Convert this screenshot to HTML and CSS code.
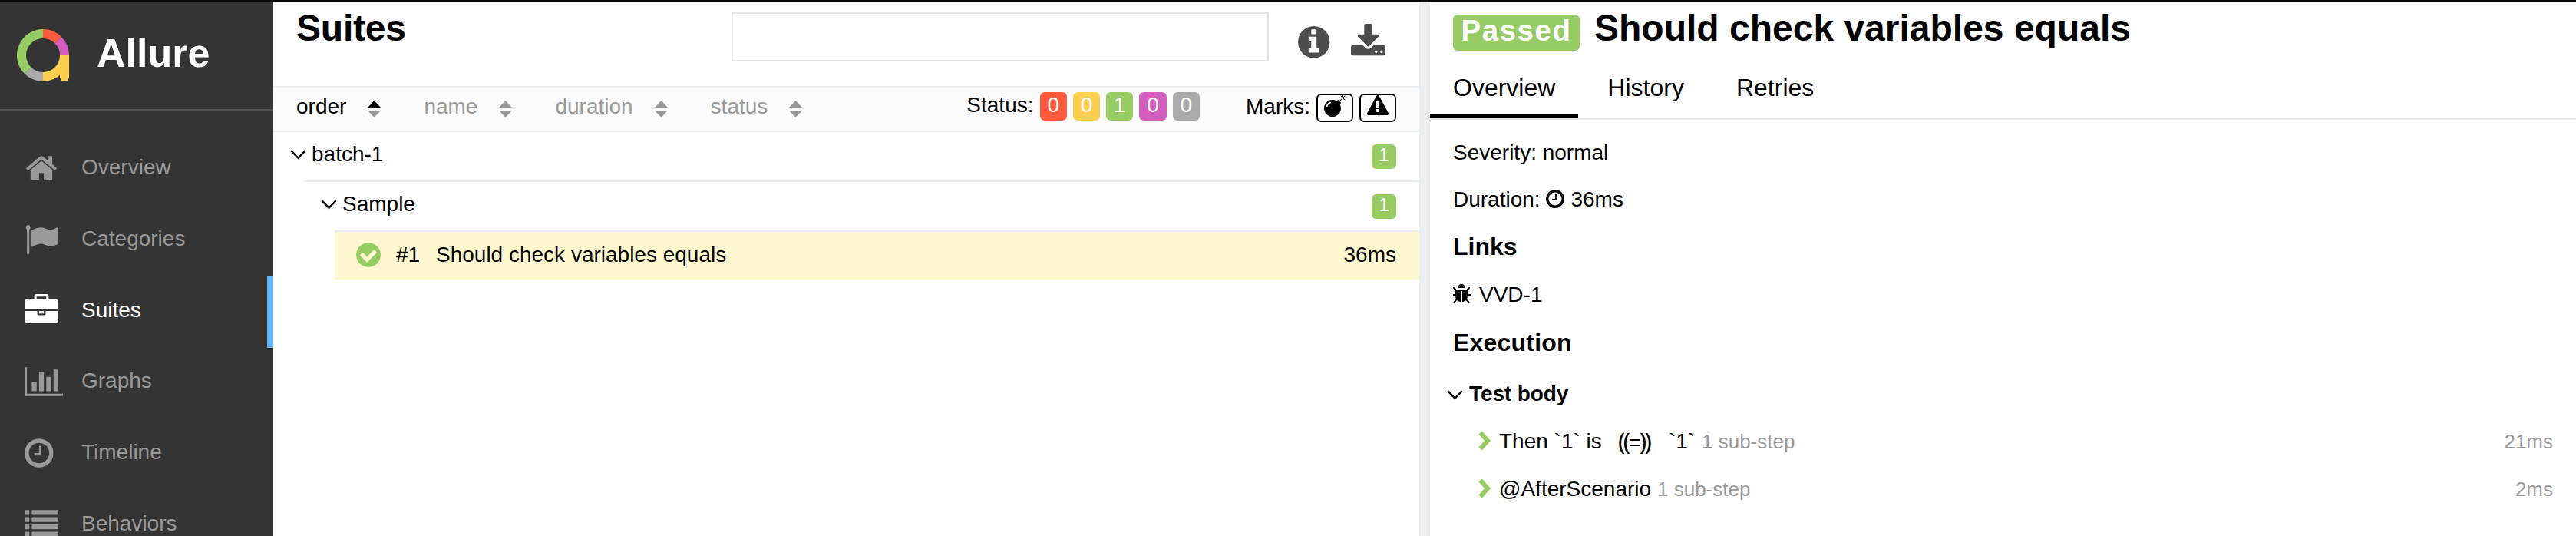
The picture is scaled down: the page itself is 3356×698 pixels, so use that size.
FILE: index.html
```html
<!DOCTYPE html>
<html lang="en">
<head>
<meta charset="utf-8">
<title>Allure Report</title>
<link rel="stylesheet" href="styles.css">
</head>
<body>
<svg class="defs" width="0" height="0">
  <symbol id="home" viewBox="0 0 1792 1792"><path d="M1472 992v480q0 26-19 45t-45 19h-384v-384h-256v384h-384q-26 0-45-19t-19-45v-480q0-1 .5-3t.5-3l575-474 575 474q1 2 1 6zm223-69l-62 74q-8 9-21 11h-3q-13 0-21-7l-692-577-692 577q-12 8-24 7-13-2-21-11l-62-74q-8-10-7-23.5t11-21.5l719-599q32-26 76-26t76 26l244 204v-195q0-14 9-23t23-9h192q14 0 23 9t9 23v408l219 182q10 8 11 21.5t-7 23.5z"/></symbol>
  <symbol id="flag" viewBox="0 0 1792 1792"><path d="M320 256q0 72-64 110v1266q0 13-9.5 22.5t-22.5 9.5h-64q-13 0-22.5-9.5t-9.5-22.5v-1266q-64-38-64-110 0-53 37.5-90.5t90.5-37.5 90.5 37.5 37.5 90.5zm1472 64v763q0 25-12.5 38.5t-39.5 27.5q-215 116-369 116-61 0-123.5-22t-108.5-48-115.5-48-142.5-22q-192 0-464 146-17 9-33 9-26 0-45-19t-19-45v-742q0-32 31-55 21-14 79-43 236-120 421-120 107 0 200 29t219 88q38 19 88 19 54 0 117.5-21t110-47 88-47 54.5-21q26 0 45 19t19 45z"/></symbol>
  <symbol id="briefcase" viewBox="0 0 1792 1792"><path d="M640 256h512v-128h-512v128zm1152 640v480q0 66-47 113t-113 47h-1472q-66 0-113-47t-47-113v-480h672v160q0 26 19 45t45 19h320q26 0 45-19t19-45v-160h672zm-768 0v128h-256v-128h256zm768-480v384h-1792v-384q0-66 47-113t113-47h352v-160q0-40 28-68t68-28h576q40 0 68 28t28 68v160h352q66 0 113 47t47 113z"/></symbol>
  <symbol id="chart" viewBox="0 0 2048 1792"><path d="M640 896v512h-256v-512h256zm384-512v1024h-256v-1024h256zm1024 1152v128h-2048v-1536h128v1408h1920zm-640-896v768h-256v-768h256zm384-384v1152h-256v-1152h256z"/></symbol>
  <symbol id="clock" viewBox="128 0 1536 1792"><path d="M1024 544v448q0 14-9 23t-23 9h-320q-14 0-23-9t-9-23v-64q0-14 9-23t23-9h224v-352q0-14 9-23t23-9h64q14 0 23 9t9 23zm416 352q0-148-73-273t-198-198-273-73-273 73-198 198-73 273 73 273 198 198 273 73 273-73 198-198 73-273zm224 0q0 209-103 385.5t-279.5 279.5-385.5 103-385.5-103-279.5-279.5-103-385.5 103-385.5 279.5-279.5 385.5-103 385.5 103 279.5 279.5 103 385.5z"/></symbol>
  <symbol id="list" viewBox="0 0 1792 1792"><rect y="128" width="256" height="256" rx="32"/><rect x="384" y="128" width="1408" height="256" rx="32"/><rect y="512" width="256" height="256" rx="32"/><rect x="384" y="512" width="1408" height="256" rx="32"/><rect y="896" width="256" height="256" rx="32"/><rect x="384" y="896" width="1408" height="256" rx="32"/><rect y="1280" width="256" height="256" rx="32"/><rect x="384" y="1280" width="1408" height="256" rx="32"/></symbol>
  <symbol id="info" viewBox="128 128 1536 1536"><path d="M1152 1376v-160q0-14-9-23t-23-9h-96v-512q0-14-9-23t-23-9h-320q-14 0-23 9t-9 23v160q0 14 9 23t23 9h96v320h-96q-14 0-23 9t-9 23v160q0 14 9 23t23 9h448q14 0 23-9t9-23zm-128-896v-160q0-14-9-23t-23-9h-192q-14 0-23 9t-9 23v160q0 14 9 23t23 9h192q14 0 23-9t9-23zm640 416q0 209-103 385.5t-279.5 279.5-385.5 103-385.5-103-279.5-279.5-103-385.5 103-385.5 279.5-279.5 385.5-103 385.5 103 279.5 279.5 103 385.5z"/></symbol>
  <symbol id="download" viewBox="64 0 1664 1536"><path d="M1344 1344q0-26-19-45t-45-19-45 19-19 45 19 45 45 19 45-19 19-45zm256 0q0-26-19-45t-45-19-45 19-19 45 19 45 45 19 45-19 19-45zm128-224v320q0 40-28 68t-68 28h-1472q-40 0-68-28t-28-68v-320q0-40 28-68t68-28h465l135 136q58 56 136 56t136-56l136-136h464q40 0 68 28t28 68zm-325-569q17 41-14 70l-448 448q-18 19-45 19t-45-19l-448-448q-31-29-14-70 17-39 59-39h256v-448q0-26 19-45t45-19h256q26 0 45 19t19 45v448h256q42 0 59 39z"/></symbol>
  <symbol id="check" viewBox="128 128 1536 1536"><path d="M1412 734q0-28-18-46l-91-90q-19-19-45-19t-45 19l-408 407-226-226q-19-19-45-19t-45 19l-91 90q-18 18-18 46 0 27 18 45l362 362q19 19 45 19 27 0 46-19l543-543q18-18 18-45zm252 162q0 209-103 385.5t-279.5 279.5-385.5 103-385.5-103-279.5-279.5-103-385.5 103-385.5 279.5-279.5 385.5-103 385.5 103 279.5 279.5 103 385.5z"/></symbol>
  <symbol id="bomb" viewBox="0 0 1792 1792"><path d="M571 589q-10-25-34-35t-49 0q-108 44-191 127t-127 191q-10 25 0 49t35 34q13 5 24 5 42 0 60-40 34-84 98.5-148.5t148.5-98.5q25-11 35-35t0-49zm942-356l46 46-244 243 68 68q19 19 19 45.5t-19 45.5l-64 64q89 161 89 343 0 143-55.5 273.5t-150 225-225 150-273.5 55.5-273.5-55.5-225-150-150-225-55.5-273.5 55.5-273.5 150-225 225-150 273.5-55.5q182 0 343 89l64-64q19-19 45.5-19t45.5 19l68 68zm8-56q-10 10-22 10-13 0-23-10l-91-90q-9-10-9-23t9-23q10-9 23-9t23 9l90 91q10 9 10 22.5t-10 22.5zm230 230q-11 9-23 9t-23-9l-90-91q-10-9-10-22.5t10-22.5q9-10 22.5-10t22.5 10l91 90q9 10 9 23t-9 23zm41-183q0 14-9 23t-23 9h-96q-14 0-23-9t-9-23 9-23 23-9h96q14 0 23 9t9 23zm-192-192v96q0 14-9 23t-23 9-23-9-9-23v-96q0-14 9-23t23-9 23 9 9 23zm151 55l-91 90q-10 10-22 10-13 0-23-10-10-9-10-22.5t10-22.5l90-91q10-9 23-9t23 9q9 10 9 23t-9 23z"/></symbol>
  <symbol id="warning" viewBox="0 0 1792 1792"><path d="M1024 1375v-190q0-14-9.5-23.5t-22.5-9.5h-192q-13 0-22.5 9.5t-9.5 23.5v190q0 14 9.5 23.5t22.5 9.5h192q13 0 22.5-9.5t9.5-23.5zm-2-374l18-459q0-12-10-19-13-11-24-11h-220q-11 0-24 11-10 7-10 21l17 457q0 10 10 16.5t24 6.5h185q14 0 23.5-6.5t10.5-16.5zm-14-934l768 1408q35 63-2 126-17 29-46.5 46t-63.5 17h-1536q-34 0-63.5-17t-46.5-46q-37-63-2-126l768-1408q17-31 47-49t65-18 65 18 47 49z"/></symbol>
  <symbol id="bug" viewBox="128 0 1536 1792"><path d="M1632 960q0 26-19 45t-45 19h-224q0 171-67 290l208 209q19 19 19 45t-19 45q-18 19-45 19t-45-19l-198-197q-5 5-15 13t-42 28.5-65 36.5-82 29-97 13v-896h-128v896q-51 0-101.5-13.5t-87-33-66-39-43.5-32.5l-15-14-183 207q-20 21-48 21-24 0-43-16-19-18-20.5-44.5t15.5-46.5l202-227q-58-114-58-274h-224q-26 0-45-19t-19-45 19-45 45-19h224v-294l-173-173q-19-19-19-45t19-45 45-19 45 19l173 173h844l173-173q19-19 45-19t45 19 19 45-19 45l-173 173v294h224q26 0 45 19t19 45zm-480-576h-640q0-133 93.5-226.5t226.5-93.5 226.5 93.5 93.5 226.5z"/></symbol>
  <symbol id="down" viewBox="0 0 21 13"><path d="M1.2 1.2L10.5 10.8L19.8 1.2" fill="none" stroke="#000" stroke-width="2.4"/></symbol>
  <symbol id="right" viewBox="0 0 16 26"><path d="M2.6 2.4L12.2 13L2.6 23.6" fill="none" stroke="#97cc64" stroke-width="6"/></symbol>
</svg>
<div class="app">
  <nav class="side">
    <div class="brand">
      <svg class="logo" width="68" height="68" viewBox="0 0 68 68">
        <g fill="none" stroke-width="12">
          <path d="M14.2 53.8A28 28 0 0 1 34 6" stroke="#97cc64"/>
          <path d="M34 6A28 28 0 0 1 53.8 14.2" stroke="#fd5a3e"/>
          <path d="M53.8 14.2A28 28 0 0 1 62 34" stroke="#d35ebe"/>
          <path d="M34 62A28 28 0 0 1 14.2 53.8" stroke="#aaa"/>
          <path d="M62 34A28 28 0 0 1 34 62" stroke="#ffd050"/>
        </g>
        <path d="M56 34h12v28a6 6 0 0 1-12 0z" fill="#ffd050"/>
      </svg>
      <span class="brand-name">Allure</span>
    </div>
    <div class="menu">
      <div class="item"><span class="ic"><svg width="44" height="44"><use href="#home"/></svg></span>Overview</div>
      <div class="item"><span class="ic"><svg width="44" height="44"><use href="#flag"/></svg></span>Categories</div>
      <div class="item active"><span class="ic"><svg width="44" height="44"><use href="#briefcase"/></svg></span>Suites</div>
      <div class="item"><span class="ic"><svg width="50.3" height="44"><use href="#chart"/></svg></span>Graphs</div>
      <div class="item"><span class="ic"><svg width="37.7" height="44"><use href="#clock"/></svg></span>Timeline</div>
      <div class="item"><span class="ic"><svg width="44" height="44"><use href="#list"/></svg></span>Behaviors</div>
    </div>
  </nav>

  <main class="suites">
    <header class="head">
      <h1 class="title">Suites</h1>
      <div class="search"></div>
      <svg class="info" width="41.5" height="41.5"><use href="#info"/></svg>
      <svg class="download" width="45" height="41.5"><use href="#download"/></svg>
    </header>
    <div class="toolbar">
      <div class="sorters">
        <span class="sorter on">order<svg class="sort" width="17" height="22" viewBox="0 0 17 22"><path d="M0 9L8.500 0L17 9z"/><path class="dim" d="M0 13L8.500 22L17 13z"/></svg></span>
        <span class="sorter">name<svg class="sort" width="17" height="22" viewBox="0 0 17 22"><path d="M0 9L8.500 0L17 9z"/><path d="M0 13L8.500 22L17 13z"/></svg></span>
        <span class="sorter">duration<svg class="sort" width="17" height="22" viewBox="0 0 17 22"><path d="M0 9L8.500 0L17 9z"/><path d="M0 13L8.500 22L17 13z"/></svg></span>
        <span class="sorter">status<svg class="sort" width="17" height="22" viewBox="0 0 17 22"><path d="M0 9L8.500 0L17 9z"/><path d="M0 13L8.500 22L17 13z"/></svg></span>
      </div>
      <div class="statuses"><span class="label">Status:</span><b class="n failed">0</b><b class="n broken">0</b><b class="n passed">1</b><b class="n unknown">0</b><b class="n skipped">0</b></div>
      <div class="marks"><span class="label">Marks:</span><span class="mark"><svg width="28" height="28"><use href="#bomb"/></svg></span><span class="mark"><svg width="28" height="28"><use href="#warning"/></svg></span></div>
    </div>
    <div class="tree">
      <div class="row"><svg class="chev" width="21" height="13"><use href="#down"/></svg><span class="name">batch-1</span><b class="count">1</b></div>
      <div class="kids">
        <div class="row"><svg class="chev" width="21" height="13"><use href="#down"/></svg><span class="name">Sample</span><b class="count">1</b></div>
        <div class="kids">
          <div class="case"><svg class="ok" width="32" height="32"><use href="#check"/></svg><span class="num">#1</span><span class="name">Should check variables equals</span><span>36ms</span></div>
        </div>
      </div>
    </div>
  </main>

  <section class="detail">
    <div class="detail-head"><span class="tag">Passed</span><h2 class="case-title">Should check variables equals</h2></div>
    <div class="tabs"><span class="tab current">Overview</span><span class="tab">History</span><span class="tab">Retries</span></div>
    <div class="body">
      <div class="line severity">Severity: normal</div>
      <div class="line duration">Duration: <svg class="small" width="24" height="28"><use href="#clock"/></svg>36ms</div>
      <h3 class="sub links">Links</h3>
      <div class="line link"><svg class="small-bug" width="24" height="28"><use href="#bug"/></svg>VVD-1</div>
      <h3 class="sub exec">Execution</h3>
      <div class="line stage"><svg class="stage-chev" width="21" height="13"><use href="#down"/></svg>Test body</div>
      <div class="line step"><svg class="arrow" width="16" height="26"><use href="#right"/></svg><span class="then">Then `1` is</span><span class="eq">⸨<span class="sign">=</span>⸩</span><span class="val">`1`</span><span class="steps">1 sub-step</span><span class="time">21ms</span></div>
      <div class="line step"><svg class="arrow" width="16" height="26"><use href="#right"/></svg><span class="after">@AfterScenario</span><span class="steps">1 sub-step</span><span class="time">2ms</span></div>
    </div>
  </section>
</div>
</body>
</html>
```
FILE: styles.css
```css
* { box-sizing: border-box; }
body {
  margin: 0;
  background: #fff;
  color: #000;
  font: 28px/36px "Liberation Sans", Arial, "DejaVu Sans", sans-serif;
}
svg { display: block; flex: none; fill: currentColor; }
.defs { position: absolute; }
h1, h2, h3 { margin: 0; font-weight: bold; }
.app {
  display: flex;
  height: 698px;
  border-top: 2px solid #0a0a0a;
  overflow: hidden;
  white-space: nowrap;
}

/* sidebar */
.side { width: 356px; flex: none; height: 696px; overflow: hidden; background: #343434; color: #999; }
.brand { display: flex; align-items: center; height: 142px; padding-left: 22px; border-bottom: 2px solid #505050; color: #fff; }
.brand-name { margin-left: 36px; padding-bottom: 6px; font-size: 52px; line-height: 60px; font-weight: bold; }
.menu { padding-top: 30.6px; }
.item { display: flex; align-items: center; height: 92.66px; padding: 0 0 5px 32px; }
.item.active { color: #fff; border-right: 8px solid #64b5f6; }
.ic { width: 74px; padding-top: 2px; }

/* suites pane */
.suites { width: 1493px; flex: none; }
.head { display: flex; align-items: flex-start; height: 110px; padding: 10px 0 0 30px; }
.title { width: 567px; margin-top: 1px; font-size: 48px; line-height: 48px; letter-spacing: -.2px; }
.search { width: 700px; height: 64px; margin-top: 4px; border: 2px solid #e5e5e5; }
.info { margin: 22px 0 0 38px; color: #4d4d4d; }
.download { margin: 19px 0 0 27px; color: #4d4d4d; }
.toolbar {
  display: flex;
  align-items: flex-start;
  height: 60px;
  padding: 6px 30px 0;
  background: #fbfbfb;
  border: solid #eceff1;
  border-width: 2px 0;
}
.sorters { display: flex; gap: 56px; margin-top: 1px; color: #999; }
.sorter { display: flex; align-items: center; gap: 28px; }
.sorter.on { color: #000; }
.sort { margin-top: 6px; }
.dim { fill: #999; }
.statuses { display: flex; gap: 8px; margin-left: auto; }
.statuses .n { width: 35.3px; height: 37px; border-radius: 6px; color: #fff; font-weight: normal; line-height: 34px; text-align: center; }
.n.failed { background: #fd5a3e; }
.n.broken { background: #ffd050; }
.n.passed { background: #97cc64; }
.n.unknown { background: #d35ebe; }
.n.skipped { background: #aaa; }
.statuses .label { line-height: 34px; }
.marks { display: flex; gap: 8px; margin: 2px 0 0 60px; }
.marks .label { line-height: 34px; }
.mark { width: 48px; height: 37px; padding: 0 8px; border: 2px solid #000; border-radius: 6px; }

.row { display: flex; align-items: center; height: 63px; padding: 0 30px 0 22px; }
.chev { margin: -4px 7px 0 0; }
.name { flex: 1; margin-top: -5px; }
.count { width: 32px; height: 32px; margin-bottom: -1px; border-radius: 6px; background: #97cc64; color: #fff; font-size: 24px; font-weight: normal; line-height: 28px; text-align: center; }
.kids { margin-left: 40px; border-top: 2px solid #eceff1; }
.case { display: flex; align-items: center; height: 62px; padding: 0 30px 3px 28px; background: #fef7cf; }
.case .name { margin-top: 0; }
.ok { margin-top: 1px; color: #97cc64; }
.num { width: 52px; margin-left: 20px; }

/* details pane */
.detail { flex: 1; border-left: 14px solid #eceff1; }
.detail-head { display: flex; height: 84px; padding: 10px 0 0 30px; }
.tag { width: 165px; height: 47px; margin: 7px 19px 0 0; border-radius: 6px; background: #97cc64; color: #fff; font-size: 38.4px; font-weight: bold; line-height: 41px; letter-spacing: 1.6px; text-align: center; }
.case-title { margin-top: 1px; font-size: 48px; line-height: 48px; }
.tabs { display: flex; height: 70px; border-bottom: 2px solid #e5e5e5; font-size: 32px; line-height: 56px; }
.tab { height: 68px; padding: 0 30px; margin-right: 8px; }
.tab.current { border-bottom: 6px solid #000; }
.body { padding: 25px 30px 0; }
.line { display: flex; height: 36px; }
.duration { margin-top: 25px; white-space: pre; }
.small { margin: 3px 8px 0 0; }
.sub { font-size: 32px; line-height: 36px; }
.links { margin-top: 25px; }
.link { margin-top: 27px; }
.small-bug { margin: 3px 10px 0 0; }
.exec { margin-top: 26px; letter-spacing: .2px; }
.stage { margin-top: 31px; font-weight: bold; letter-spacing: -.1px; }
.stage-chev { margin: 13px 8px 0 -8px; }
.step { margin-top: 26px; }
.arrow { margin: 4px 11px 0 33px; }
.then { width: 155px; }
.eq { width: 66px; font-family: "DejaVu Sans", sans-serif; font-size: 31px; letter-spacing: -2.5px; }
.sign { font-family: "Liberation Sans", Arial, sans-serif; font-size: 28px; letter-spacing: -1.5px; }
.val { width: 43px; }
.after { width: 206px; }
.steps, .time { color: #999; font-size: 26px; }
.time { margin-left: auto; }
```
